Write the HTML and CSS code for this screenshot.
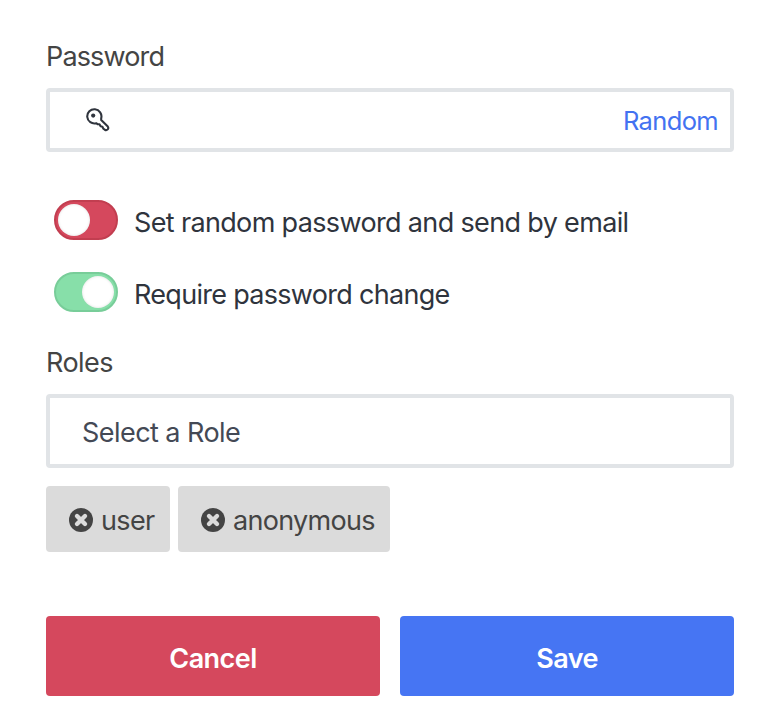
FILE: index.html
```html
<!DOCTYPE html>
<html lang="en">
<head>
<meta charset="utf-8">
<title>User settings</title>
<link rel="stylesheet" href="styles.css">
</head>
<body>
<form class="form">
  <label class="label"><span class="t-password">Password</span></label>
  <div class="field">
    <svg class="key" viewBox="0 0 24 24" width="24" height="24"><path d="M15.2 10.2A7.1 7.1 0 1 0 10.2 15.2L11.8 16.3H13.5L14.6 18.3L16.4 18.7L17.3 20.6L18.8 21.8Q20.5 22.7 21.7 21.4Q22.8 19.9 21.8 18.6L15.2 12Z"/><circle cx="7.2" cy="7.6" r="2.1"/></svg>
    <a class="random"><span class="t-random">Random</span></a>
  </div>
  <div class="toggle-row first"><span class="switch off"></span><span class="t-send">Set random password and send by email</span></div>
  <div class="toggle-row"><span class="switch on"></span><span class="t-require">Require password change</span></div>
  <label class="label roles"><span class="t-roles">Roles</span></label>
  <div class="field select"><span class="t-select">Select a Role</span></div>
  <div class="tags">
    <span class="tag user"><svg viewBox="0 0 24 24" width="24" height="24"><circle cx="12" cy="12" r="12"/><path d="M8 8L16 16M16 8L8 16"/></svg><span class="t-user">user</span></span>
    <span class="tag anonymous"><svg viewBox="0 0 24 24" width="24" height="24"><circle cx="12" cy="12" r="12"/><path d="M8 8L16 16M16 8L8 16"/></svg><span class="t-anonymous">anonymous</span></span>
  </div>
  <div class="actions">
    <button type="button" class="button cancel"><span class="t-cancel">Cancel</span></button>
    <button type="button" class="button save"><span class="t-save">Save</span></button>
  </div>
</form>
</body>
</html>
```
FILE: styles.css
```css
* { box-sizing: border-box; }
body { margin: 0; height: 716px; overflow: hidden; background: #fff; color: #2f343d; font: 27px/36px Inter, sans-serif; letter-spacing: -0.65px; }
span { white-space: nowrap; }
.form { width: 688px; margin-left: 46px; padding-top: 39px; }
.label { display: block; height: 35px; color: #444; }
.t-password { letter-spacing: -0.85px; }
.t-roles, .t-select { letter-spacing: -0.55px; }
.t-require, .t-anonymous { letter-spacing: -0.7px; }
.t-select { color: #444955; }
.field { height: 64px; margin-top: 14px; border: 4px solid #e1e4e7; border-radius: 4px; display: flex; align-items: center; padding: 2px 12px 0 36px; }
.key { fill: none; stroke: #2f343d; stroke-width: 2.1; stroke-linejoin: round; margin-top: -2px; }
.key circle { fill: #2f343d; stroke: none; }
.random { margin-left: auto; color: #4372f1; font-size: 25.5px; }
.toggle-row { height: 40px; margin: 32px 0 0 8px; display: flex; align-items: center; gap: 16px; }
.toggle-row.first { margin-top: 48px; }
.toggle-row > span:last-child { padding-top: 6px; }
.switch { width: 64px; height: 40px; border-radius: 20px; border: 2px solid #c23e50; background: #d5485d; display: flex; align-items: center; padding: 2px; }
.switch::after { content: ""; width: 32px; height: 32px; border-radius: 50%; background: #fff; box-shadow: inset 0 0 3px #0002; }
.on { background: #87dfa9; border-color: #78cd99; justify-content: flex-end; }
.roles { margin-top: 33px; }
.select { height: 74px; padding-left: 32px; padding-top: 4px; }
.tags { display: flex; gap: 8px; margin-top: 18px; }
.tag { height: 66px; background: #dbdbdb; border-radius: 4px; display: flex; align-items: center; gap: 8px; padding: 2px 0 0 23px; color: #444; }
.tag > span { padding-top: 2px; }
.tag svg { fill: #444; stroke: #dbdbdb; stroke-width: 4.4; stroke-linecap: round; }
.tag circle { stroke: none; }
.user { width: 124px; }
.anonymous { width: 212px; }
.actions { display: flex; gap: 20px; margin-top: 64px; }
.button { flex: 1; height: 80px; border: 0; border-radius: 4px; padding: 6px 0 0; font: 600 27px/36px Inter, sans-serif; letter-spacing: -0.55px; color: #fff; }
.cancel { background: #d5485d; }
.save { background: #4675f3; }
```
